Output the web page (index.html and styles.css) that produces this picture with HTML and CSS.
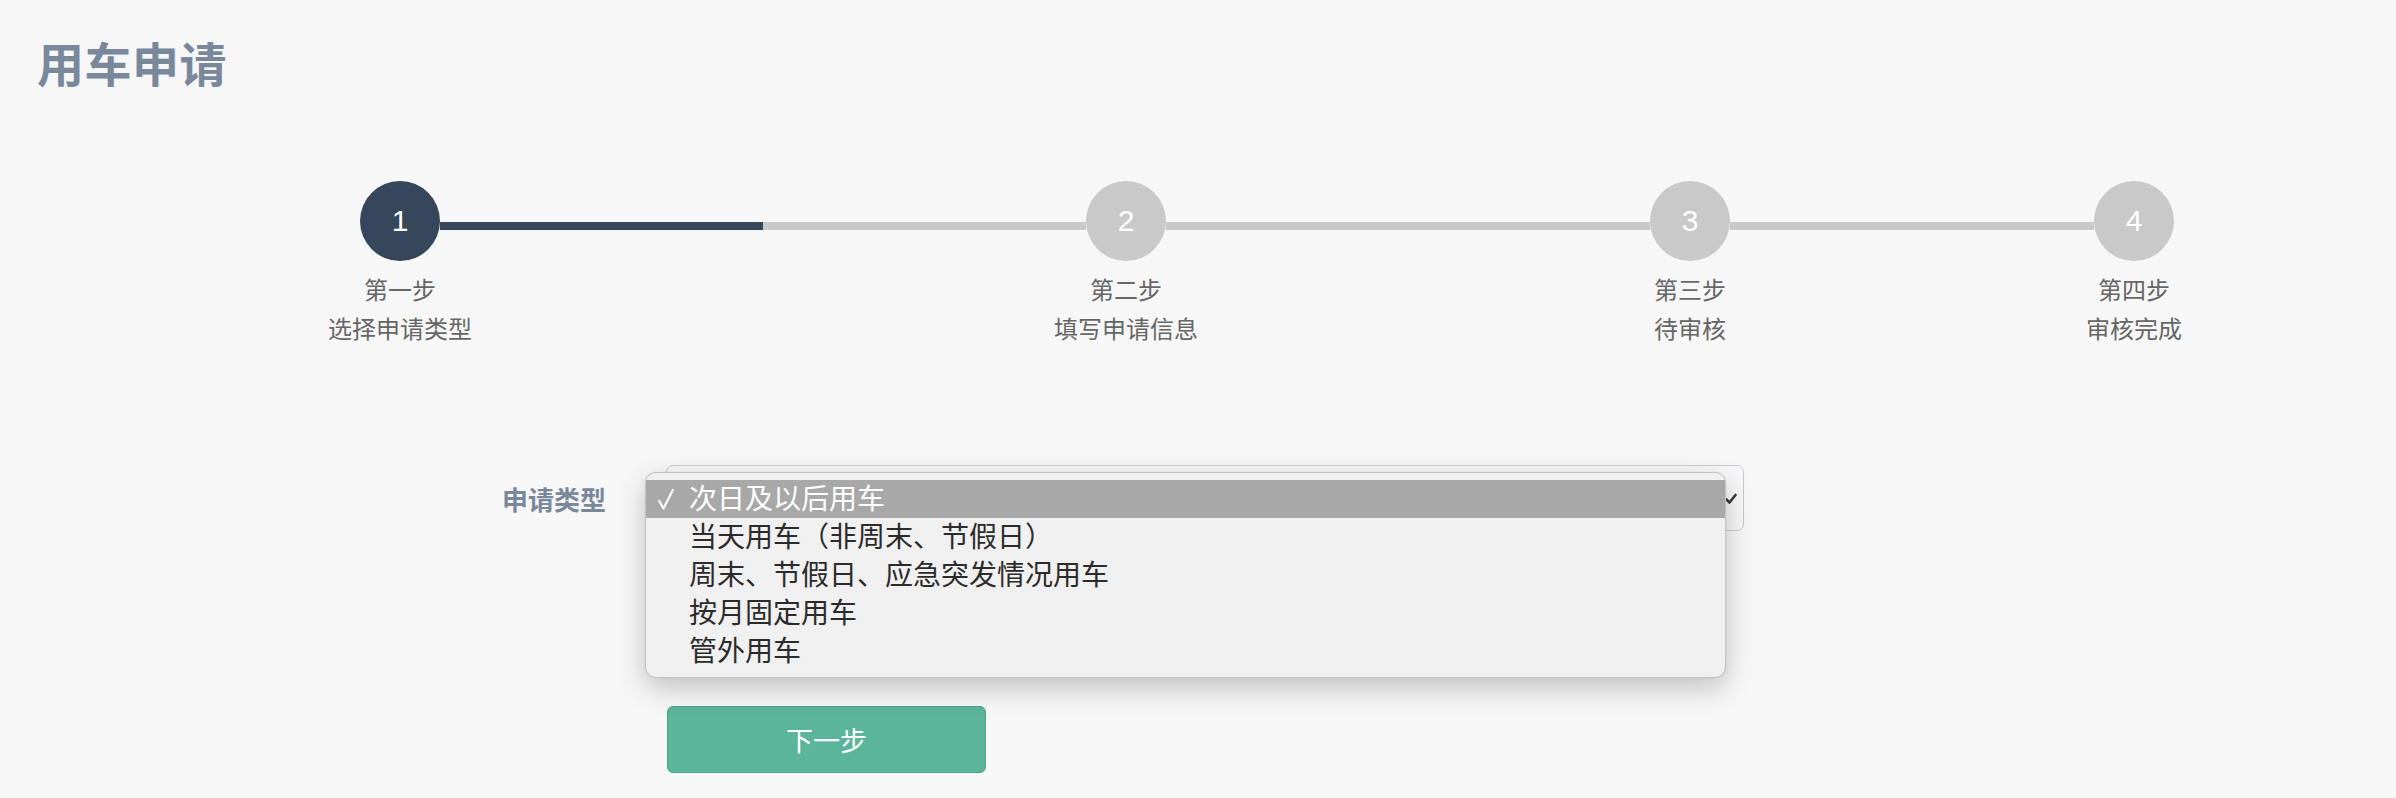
FILE: index.html
```html
<!DOCTYPE html>
<html lang="zh-CN">
<head>
<meta charset="utf-8">
<title>用车申请</title>
<link rel="stylesheet" href="styles.css">
</head>
<body>
<div class="page">
  <h1 class="title">用车申请</h1>

  <div class="steps">
    <div class="step active">
      <div class="circle">1</div>
      <div class="step-label">第一步</div>
      <div class="step-desc">选择申请类型</div>
    </div>
    <div class="connector c1"><div class="progress" style="width:50%"></div></div>
    <div class="step">
      <div class="circle">2</div>
      <div class="step-label">第二步</div>
      <div class="step-desc">填写申请信息</div>
    </div>
    <div class="connector c2"></div>
    <div class="step">
      <div class="circle">3</div>
      <div class="step-label">第三步</div>
      <div class="step-desc">待审核</div>
    </div>
    <div class="connector c3"></div>
    <div class="step">
      <div class="circle">4</div>
      <div class="step-label">第四步</div>
      <div class="step-desc">审核完成</div>
    </div>
  </div>

  <form class="form">
    <div class="form-row">
      <label class="form-label">申请类型</label>
      <div class="select-wrap">
        <div class="select">
          <svg class="select-arrow" width="12" height="12" viewBox="0 0 12 12"><path d="M1.5 6.5 L4.5 9.5 L10.5 2" fill="none" stroke="#3a3a3a" stroke-width="2.6" stroke-linecap="round" stroke-linejoin="round"/></svg>
        </div>
        <ul class="dropdown">
          <li class="option selected">
            <span class="mark"><svg width="16" height="21" viewBox="0 0 16 21"><path d="M1.2 12 L5.5 19.5 L14.8 1" fill="none" stroke="#ffffff" stroke-width="2.2" stroke-linecap="round" stroke-linejoin="round"/></svg></span>
            <span class="opt-text">次日及以后用车</span>
          </li>
          <li class="option"><span class="mark"></span><span class="opt-text">当天用车（非周末、节假日）</span></li>
          <li class="option"><span class="mark"></span><span class="opt-text">周末、节假日、应急突发情况用车</span></li>
          <li class="option"><span class="mark"></span><span class="opt-text">按月固定用车</span></li>
          <li class="option"><span class="mark"></span><span class="opt-text">管外用车</span></li>
        </ul>
      </div>
    </div>
    <div class="form-actions">
      <button type="button" class="btn-next">下一步</button>
    </div>
  </form>
</div>
</body>
</html>
```

FILE: styles.css
```css
html, body {
  margin: 0;
  padding: 0;
  background: #f7f7f7;
}
body {
  font-family: "Noto Sans CJK SC", "Noto Sans", sans-serif;
  color: #333;
}
.page {
  padding: 30px 0 0 37px;
  box-sizing: border-box;
  width: 2396px;
  height: 798px;
  overflow: hidden;
}
.title {
  margin: 0;
  font-size: 47px;
  line-height: 64px;
  font-weight: 700;
  color: #7a889c;
  letter-spacing: 0.5px;
}

/* steps */
.steps {
  display: flex;
  align-items: flex-start;
  margin: 87px 0 0 283px;
}
.step {
  width: 160px;
  flex: none;
  display: flex;
  flex-direction: column;
  align-items: center;
  position: relative;
  z-index: 1;
}
.circle {
  width: 80px;
  height: 80px;
  border-radius: 50%;
  background: #c9c9c9;
  color: #fff;
  font-family: "Liberation Sans", Arial, sans-serif;
  font-size: 30px;
  line-height: 80px;
  text-align: center;
  margin-bottom: 8px;
}
.step.active .circle {
  background: #36475c;
}
.step-label, .step-desc {
  font-size: 24px;
  line-height: 39px;
  color: #666;
  white-space: nowrap;
}
.connector {
  flex: none;
  height: 8px;
  margin: 41px -40px 0;
  background: #c9c9c9;
}
.connector .progress {
  height: 100%;
  background: #36475c;
}
.c1 { width: 646px; }
.c2 { width: 484px; }
.c3 { width: 364px; }

/* form */
.form {
  margin: 118px 0 0 369px;
}
.form-row {
  display: flex;
  align-items: center;
}
.form-label {
  width: 200px;
  margin-right: 60px;
  text-align: right;
  font-size: 26px;
  font-weight: 700;
  color: #7a889c;
}
.select-wrap {
  position: relative;
}
.select {
  width: 1078px;
  height: 66px;
  box-sizing: border-box;
  border: 1.5px solid #c5c9d0;
  border-radius: 7px;
  background: #f7f7f7;
  display: flex;
  align-items: center;
  justify-content: flex-end;
  padding: 0 6px 0 20px;
}
.select-arrow {
  display: block;
  margin-top: 2px;
}
.dropdown {
  position: absolute;
  left: -21px;
  top: 7px;
  width: 1081px;
  box-sizing: border-box;
  margin: 0;
  padding: 7px 0;
  list-style: none;
  background: #f0f0f0;
  border: 1px solid #c2c2c2;
  border-radius: 11px;
  box-shadow: 0 10px 28px rgba(0, 0, 0, 0.22), 0 0 2px rgba(0, 0, 0, 0.08);
  z-index: 10;
}
.option {
  display: flex;
  align-items: center;
  height: 38px;
  font-size: 28px;
  line-height: 38px;
  color: #2b2b2b;
  white-space: nowrap;
}
.opt-text {
  margin-top: -4px;
}
.option.selected {
  background: #a8a8a8;
  color: #fff;
}
.mark {
  width: 43px;
  flex: none;
  display: flex;
  align-items: center;
  padding-left: 12px;
  box-sizing: border-box;
}
.mark svg {
  display: block;
}

.form-actions {
  margin: 175px 0 0 261px;
}
.btn-next {
  width: 319px;
  height: 67px;
  box-sizing: border-box;
  background: #5bb59a;
  border: 1.5px solid #4ea386;
  border-radius: 6px;
  color: #fff;
  font-family: "Noto Sans CJK SC", sans-serif;
  font-size: 27px;
  padding: 0;
  cursor: pointer;
}
```
